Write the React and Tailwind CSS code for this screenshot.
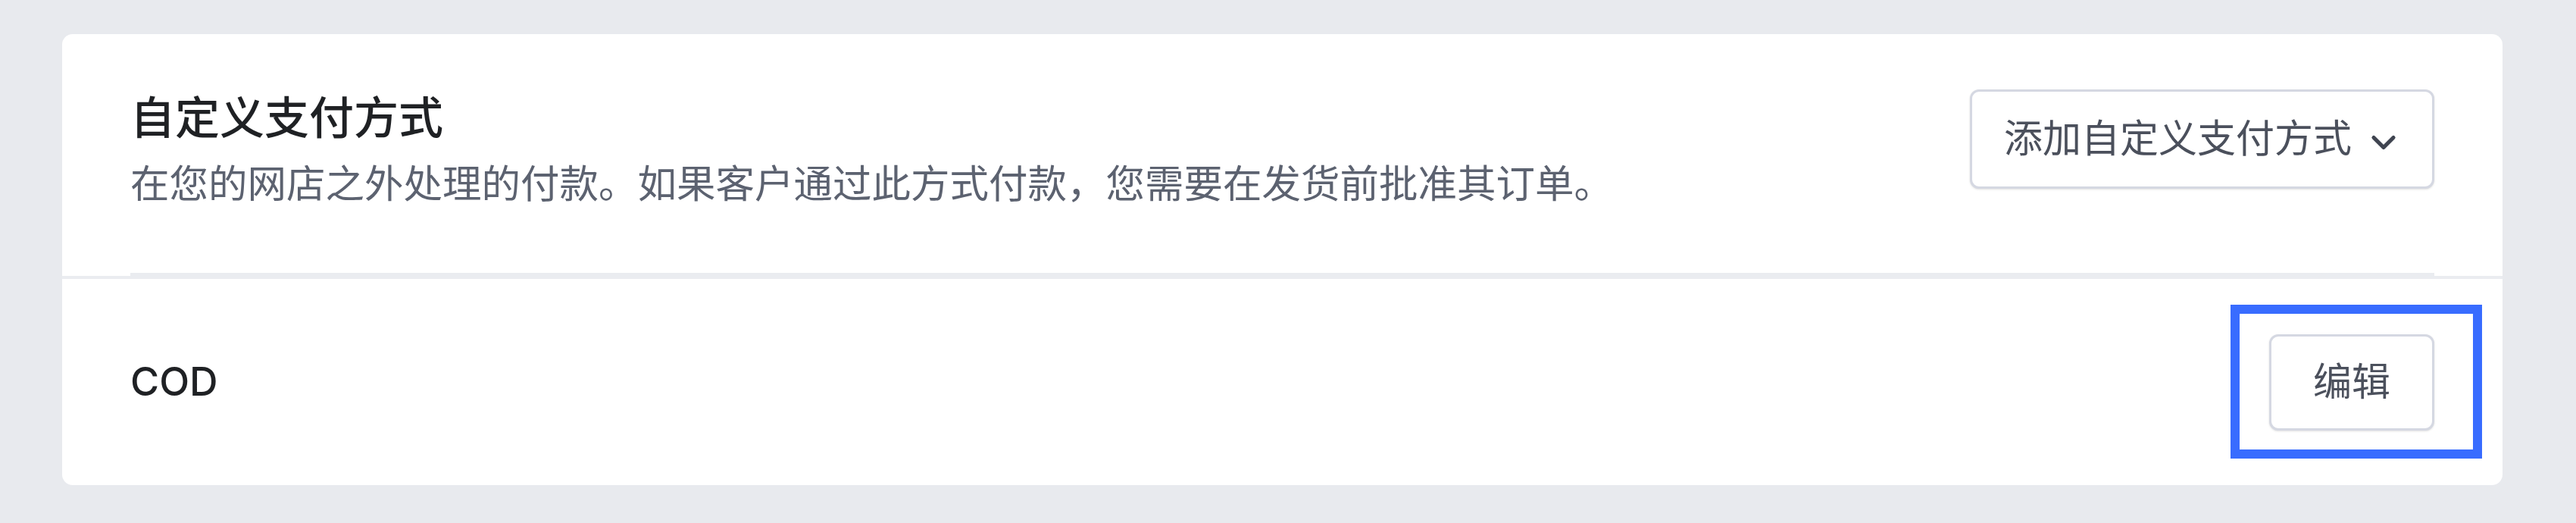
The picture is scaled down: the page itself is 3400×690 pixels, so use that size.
import React from "react";
import { ChevronDown } from "lucide-react";

const PaymentCard = () => {
  return (
    <div className="w-[3221px] rounded-[14px] bg-white">
      {/* header */}
      <div className="px-[90px]">
        <div className="flex items-start justify-between border-b-4 border-[#eaecf0] pt-[71px] pb-[82px]">
          <div>
            <h2 className="text-[59px] leading-[80px] font-medium text-[#1f2124]">
              自定义支付方式
            </h2>
            <p className="mt-[10px] text-[51.5px] leading-[72px] text-[#5c6270]">
              在您的网店之外处理的付款。如果客户通过此方式付款，您需要在发货前批准其订单。
            </p>
          </div>
          <button className="mt-[2px] flex h-[131px] items-center rounded-[12px] border-[3px] border-[#d5d8e2] bg-white pl-[42px] pr-[38px] text-[51px] text-[#4b505c] shadow-sm">
            添加自定义支付方式
            <ChevronDown className="ml-[16px] mt-[8px] h-[52px] w-[52px] text-[#3f4450]" strokeWidth={2.4} />
          </button>
        </div>
      </div>

      {/* method row */}
      <div className="flex h-[276px] items-center justify-between border-t-4 border-[#eaecf0] px-[90px]">
        <span className="text-[52px] font-medium text-[#1f2124]">COD</span>
        <div className="relative">
          <button className="flex h-[127px] w-[218px] items-center justify-center rounded-[12px] border-[3px] border-[#d5d8e2] bg-white text-[51px] text-[#4b505c] shadow-sm">
            编辑
          </button>
          <div className="pointer-events-none absolute left-[-51px] top-[-39px] h-[203px] w-[332px] border-[12px] border-[#386cff]" />
        </div>
      </div>
    </div>
  );
};

export default function App() {
  return (
    <div className="h-[690px] w-[3400px] bg-[#e8eaee] pl-[82px] pt-[45px] font-['Inter','Noto_Sans_CJK_SC',sans-serif]">
      <PaymentCard />
    </div>
  );
}
